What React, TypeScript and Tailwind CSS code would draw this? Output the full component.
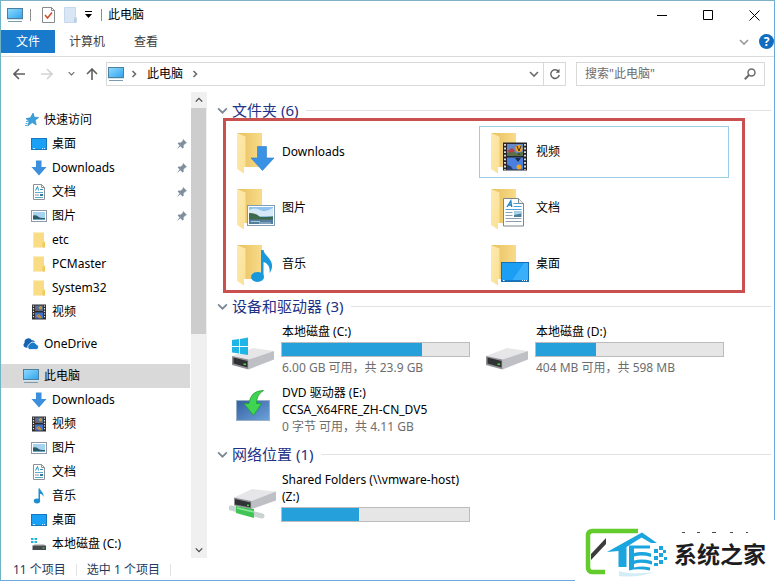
import type { ReactNode } from "react";

type IconProps = { className?: string };

const MonitorIcon = ({ className = "w-4 h-4" }: IconProps) => (
  <svg viewBox="0 0 16 16" className={className}>
    <defs>
      <linearGradient id="screen" x1="0" y1="0" x2="1" y2="1">
        <stop offset="0" stopColor="#8fdcff" />
        <stop offset="1" stopColor="#2fa3ee" />
      </linearGradient>
    </defs>
    <rect x="0.5" y="1.5" width="15" height="10" fill="url(#screen)" stroke="#4e7f9c" />
    <path d="M1 14.5h14" stroke="#7d9bb0" />
    <path d="M0 12.5h16" stroke="#cfe6f3" />
  </svg>
);

const StarIcon = () => (
  <svg viewBox="0 0 16 16" className="w-4 h-4">
    <path
      d="M10 1l1.4 4.2 4.3.3-3.5 2.7 1 4.8-4-2.4L4.600 14l1.500-4.400L3 6.600l4.400-.8z"
      fill="#3aa0dc"
      stroke="#2384c2"
      strokeWidth="0.6"
    />
    <path d="M3 9.500h2.500M2.500 11.500h2M2 13.500h2" stroke="#5fb4e4" />
  </svg>
);

const DesktopIcon = () => (
  <svg viewBox="0 0 16 16" className="w-4 h-4">
    <rect x="0.5" y="2.5" width="15" height="11" fill="#1aa0f5" stroke="#1778bd" />
    <path d="M2 12.5h2M11 12.5h1M13 12.5h1" stroke="#d8f0ff" />
  </svg>
);

const DownIcon = () => (
  <svg viewBox="0 0 16 16" className="w-4 h-4">
    <path d="M5 0.5h5.5V7H15.5L8 15.5.5 7H5z" fill="#3b8fdc" />
  </svg>
);

const DocIcon = () => (
  <svg viewBox="0 0 16 16" className="w-4 h-4">
    <path d="M2.5.5h8l3 3v12h-11z" fill="#fff" stroke="#8b9299" />
    <path d="M10.5.5v3h3" fill="none" stroke="#8b9299" />
    <path d="M4.5 6.5L6.5 2.5l1 4M9 5.5h3" fill="none" stroke="#2a93c4" />
    <path d="M4 8.5h8M4 13.5h8" stroke="#5eaaca" />
    <path d="M4 11h4" stroke="#8b9299" />
    <path d="M9 11h3" stroke="#2f7ba5" strokeWidth="2" />
  </svg>
);

const PictureIcon = () => (
  <svg viewBox="0 0 16 16" className="w-4 h-4">
    <rect x="0.5" y="2.5" width="15" height="11" fill="#fff" stroke="#8d9aa5" />
    <rect x="2" y="4" width="12" height="8" fill="#a8d3ee" />
    <path d="M2 7.5q3-1 5 1t7 1.5v2H2z" fill="#2c5c6b" />
    <path d="M2 11h12v1H2z" fill="#6aa5bd" />
  </svg>
);

const FolderIcon = () => (
  <svg viewBox="0 0 16 16" className="w-4 h-4">
    <path d="M2 .5h11v9l1 .8v5.2H2z" fill="#f9dc83" />
    <path d="M11.5 15.5V11l2.5-1.5v6z" fill="#f1c95c" />
    <path d="M2.5 1v14.5" stroke="#fbe7a8" />
  </svg>
);

const VideoIcon = () => (
  <svg viewBox="0 0 16 16" className="w-4 h-4">
    <rect x="1" y="0.5" width="14" height="15" fill="#2d2d30" />
    <rect x="4" y="1.5" width="8" height="5.5" fill="#5a6f8f" />
    <rect x="4" y="8.5" width="8" height="6" fill="#3f74c9" />
    <circle cx="9.5" cy="3.8" r="1.7" fill="#c7964a" />
    <path d="M4 7V4.5l3 1.5v1z" fill="#7d5b45" />
    <path d="M5 12l3-2 3 3.5-2 1z" fill="#c98b3c" />
    <path d="M2.5 1.5v13M13.5 1.5v13" stroke="#e4e4e4" strokeWidth="1.2" strokeDasharray="1.3 1.3" />
  </svg>
);

const MusicIcon = () => (
  <svg viewBox="0 0 16 16" className="w-4 h-4">
    <path d="M7.5.5h1.5c.4 3 4.2 4 3.5 8.5-.8-2.3-2-3-3.5-3.2V13H7.5z" fill="#1d8fd1" />
    <ellipse cx="6" cy="13" rx="3.2" ry="2.4" fill="#1d8fd1" />
  </svg>
);

const DiskIcon = () => (
  <svg viewBox="0 0 16 16" className="w-4 h-4">
    <path d="M0 2h2.5v2H0zM3.5 2H6v2H3.5zM0 5h2.5v2H0zM3.5 5H6v2H3.5z" fill="#25b4dd" />
    <path d="M3.5 8h9.5l1.5 2H2z" fill="#c9cbcd" />
    <rect x="1.5" y="9.5" width="13.5" height="4.5" fill="#454a4d" />
    <path d="M11.5 12h2" stroke="#4fd06a" />
  </svg>
);

const CloudIcon = () => (
  <svg viewBox="0 0 16 16" className="w-4 h-4">
    <path d="M2.5 11.5A2.6 2.6 0 0 1 1.6 6.8 3.9 3.9 0 0 1 8.8 4.2a3.5 3.5 0 0 1 3 1.3L6 12z" fill="#1562b0" />
    <path
      d="M6.5 13.5a2.8 2.8 0 0 1 .1-5.3A3.6 3.6 0 0 1 13.2 8.3a2.7 2.7 0 0 1 .6 5.2z"
      fill="#1b7ac9"
      stroke="#fff"
      strokeWidth="0.8"
    />
  </svg>
);

const PinIcon = () => (
  <svg viewBox="0 0 12 12" className="w-3 h-3">
    <path d="M7 1l4 4-1.500.4-2 2 .2 2.300L6.500 10.500 4.300 8.300 1 11.300l2.500-4L1.600 5.500l1-1 2.400.1 1.700-1.900z" fill="#7f8f9d" />
  </svg>
);

const Chevron = ({ d, className, color = "#6b6b6b" }: { d: string; className: string; color?: string }) => (
  <svg viewBox="0 0 10 10" className={className}>
    <path d={d} fill="none" stroke={color} strokeWidth="1.6" />
  </svg>
);

const RIGHT = "M3.5 2l3 3-3 3";
const DOWN = "M1 3l4 4 4-4";
const UP = "M1 7l4-4 4 4";

const BigFolder = ({ children }: { children: ReactNode }) => (
  <svg viewBox="0 0 48 48" className="w-12 h-12 shrink-0">
    <defs>
      <linearGradient id="flap" x1="0" y1="0" x2="1" y2="1">
        <stop offset="0" stopColor="#fdeab0" />
        <stop offset="1" stopColor="#fae093" />
      </linearGradient>
      <linearGradient id="back" x1="0" y1="0" x2="1" y2="0">
        <stop offset="0" stopColor="#e8bf5c" />
        <stop offset="1" stopColor="#f8db8a" />
      </linearGradient>
    </defs>
    <path d="M8 5h25v34H8z" fill="url(#back)" />
    <path d="M8 5l8.5 3.500V39H15v6.500L8 41z" fill="url(#flap)" />
    {children}
  </svg>
);

const Drive = () => (
  <g>
    <path d="M3 32l21-8 21 3-25.500 8.500z" fill="#e6e6e9" />
    <path d="M19.500 35.500L45 27v8.500l-25.500 10z" fill="#bfc0c5" />
    <path d="M3 32l16.500 3.500v10L3 41z" fill="#8e9093" />
    <path d="M4.500 33.500L18.500 37v6.500l-14-4z" fill="#2f3133" />
    <path d="M14.500 40l2.500.6" stroke="#51d64e" strokeWidth="1.5" />
  </g>
);

const folders: { name: string; art: ReactNode }[] = [
  {
    name: "Downloads",
    art: <path d="M28.500 18.500h9V30h7.500L33.500 42.500 22 30h6.500z" fill="#3a92e4" stroke="#2b78c4" strokeWidth="0.6" />,
  },
  {
    name: "视频",
    art: (
      <g>
        <rect x="20" y="14.5" width="24" height="28" fill="#26262a" />
        <rect x="24" y="16" width="16" height="12" fill="#6687c8" />
        <rect x="24" y="29.5" width="16" height="12" fill="#4b7fdd" />
        <path d="M24 25l5-3 4 3 7-1v4H24z" fill="#587148" />
        <path d="M24 23l5-3 3 3-4 2z" fill="#b83f43" />
        <circle cx="36" cy="20.5" r="3.5" fill="#f0a51e" />
        <path d="M34 18l2 5M38 18l-2 5M36 25v2" stroke="#442b20" />
        <path d="M32 30h6l-3 4z" fill="#1d2c48" />
        <circle cx="36" cy="39" r="2.5" fill="#f0a51e" />
        <path d="M24 41.5v-5l4 2 2 3z" fill="#263c68" />
        <path d="M22 16v26M42 16v26" stroke="#eee" strokeWidth="1.8" strokeDasharray="1.8 1.8" />
      </g>
    ),
  },
  {
    name: "图片",
    art: (
      <g>
        <rect x="18.5" y="21.5" width="27" height="20" fill="#fff" stroke="#7f9eb5" />
        <rect x="20" y="23" width="24" height="17" fill="#8fc3ee" />
        <path d="M20 26q6-3 11 0t13-2v8H20z" fill="#d6e9f7" />
        <path d="M20 29q7 0 11 4 6 0 13-.5V36H20z" fill="#3f6a49" />
        <path d="M20 35.500h24V40H20z" fill="#527d9c" />
        <path d="M22 37.500h9M30 39h12" stroke="#a6c9dc" />
      </g>
    ),
  },
  {
    name: "文档",
    art: (
      <g>
        <path d="M20.500 14.500h15l5 5v22.500h-20z" fill="#fff" stroke="#7e868d" />
        <path d="M35.500 14.500v5h5" fill="#e9edf0" stroke="#7e868d" />
        <path d="M24 23l3.800-6 .9 6M25.200 21h3.500" fill="none" stroke="#1f83c7" strokeWidth="1.4" />
        <path d="M30.500 19.500h5M30.500 22.500h8M22.500 25.500h16" stroke="#4ca3dc" />
        <path d="M22.500 28.500h7M22.500 31.500h7M22.500 34.500h16M22.500 37.500h16" stroke="#8fa0ad" />
        <rect x="31" y="27.5" width="7.5" height="5.5" fill="#4c7f9c" />
        <path d="M31 27.500h7.500v2L31 31z" fill="#a9d3ea" />
      </g>
    ),
  },
  {
    name: "音乐",
    art: (
      <g fill="#1899dc">
        <path d="M32 10h2.500c1 6 9.500 9 8.500 17-.3 3-1.500 5-2.500 6 1-6-2-10-6-11v16H32z" />
        <ellipse cx="28.5" cy="37" rx="6.5" ry="5" />
      </g>
    ),
  },
  {
    name: "桌面",
    art: (
      <g>
        <rect x="18.5" y="22.5" width="27" height="19" fill="#1b9ff5" stroke="#1670b4" />
        <path d="M29 41l12-18h4v18z" fill="#3bb0fa" />
        <path d="M19 40.500h26" stroke="#1576bf" />
        <path d="M20 40.500h1.500M39 40.500h1M41 40.500h1M43 40.500h1" stroke="#fff" />
      </g>
    ),
  },
];

type Place = { name: string; icon: ReactNode; pinned?: boolean };

const quickAccess: Place[] = [
  { name: "桌面", icon: <DesktopIcon />, pinned: true },
  { name: "Downloads", icon: <DownIcon />, pinned: true },
  { name: "文档", icon: <DocIcon />, pinned: true },
  { name: "图片", icon: <PictureIcon />, pinned: true },
  { name: "etc", icon: <FolderIcon /> },
  { name: "PCMaster", icon: <FolderIcon /> },
  { name: "System32", icon: <FolderIcon /> },
  { name: "视频", icon: <VideoIcon /> },
];

const thisPc: Place[] = [
  { name: "Downloads", icon: <DownIcon /> },
  { name: "视频", icon: <VideoIcon /> },
  { name: "图片", icon: <PictureIcon /> },
  { name: "文档", icon: <DocIcon /> },
  { name: "音乐", icon: <MusicIcon /> },
  { name: "桌面", icon: <DesktopIcon /> },
  { name: "本地磁盘 (C:)", icon: <DiskIcon /> },
];

const TreeRoot = ({ name, icon, selected }: { name: string; icon: ReactNode; selected?: boolean }) => (
  <button className={`flex items-center w-full h-6 pl-[22px] gap-[5px] ${selected ? "bg-[#d9d9d9]" : ""}`}>
    {icon}
    {name}
  </button>
);

const TreeItem = ({ name, icon, pinned }: Place) => (
  <button className="flex items-center w-full h-6 pl-[30px] pr-[2px] gap-[5px]">
    {icon}
    <span className="flex-1 text-left">{name}</span>
    {pinned && <PinIcon />}
  </button>
);

const Group = ({ title, children }: { title: string; children: ReactNode }) => (
  <section>
    <h2 className="flex items-center h-6 pr-[3px] text-[15px] text-[#1e3287]">
      <Chevron d={DOWN} className="w-[11px] h-[11px] mr-1" color="#7a8794" />
      {title}
      <span className="flex-1 h-px ml-2 bg-[#dfe3e6]" />
    </h2>
    {children}
  </section>
);

const Usage = ({ label, percent }: { label: string; percent: number }) => (
  <div
    role="meter"
    aria-label={label}
    aria-valuenow={percent}
    className="h-[15px] w-[189px] my-[2px] -ml-px bg-[#e6e6e6] border border-[#bcbcbc]"
  >
    <div className="h-full bg-[#26a0da]" style={{ width: `${percent}%` }} />
  </div>
);

const DriveItem = ({ art, children }: { art: ReactNode; children: ReactNode }) => (
  <div className="flex items-start h-[61px] pt-[5px] pl-1 gap-[5px] leading-[17px]">
    <svg viewBox="0 0 48 48" className="w-12 h-12 mt-px shrink-0">
      {art}
    </svg>
    <div className="w-[190px]">{children}</div>
  </div>
);

const Logo = () => (
  <div className="absolute -right-px -bottom-px flex items-center w-[200px] h-[61px] bg-white">
    <svg viewBox="0 0 200 61" className="absolute inset-0 w-full h-full">
      <path d="M63 11H17.500q-4.500 0-4.500 4.500v31.500q0 5 4 5h13" fill="none" stroke="#62cc2c" strokeWidth="4.5" />
      <path d="M16 40v-6l15-16v6z" fill="#3c3c3c" />
      <g fill="#1ba5df">
        <path d="M32 32L67 12.500 82 23h-6l-9.500-5.500-15 9.500v20h-8V31z" />
        <path d="M54 25.500h21v3H59v4.500q8-2 17 .5v3.500q-9-2.500-17-.5v4q8-2 18 .5v3.500q-10-3-18-.5v3.500q8-2 16 0v3q-13-2.500-21 0z" />
        <path d="M79 29h4v4h-4zM84 26h4v4h-4zM79 36h4v4h-4zM84 33h4v4h-4zM88 30h3v3h-3zM84 40h4v4h-4zM89 37h3v3h-3zM79 43h4v3h-4z" />
      </g>
      <path d="M44 51q12 4 36 1-18 6-36 4z" fill="#d3edf7" />
      <path d="M107 12.500h3M122 12.500h3M137 12.500h4M155 12.500h3M171 12.500h2" stroke="#4a4a4a" />
    </svg>
    <span className="relative ml-[99px] mt-[7px] text-[23px] leading-7 font-bold text-[#1d1d1f]">系统之家</span>
  </div>
);

export default function App() {
  return (
    <div className="relative flex flex-col min-h-screen bg-white border border-[#6aaade] border-l-[#6fb3c4] border-t-[#7fb2c8] font-['Noto_Sans','Noto_Sans_CJK_SC',sans-serif] text-[12px] leading-4 text-black whitespace-nowrap">
      <header className="flex items-center h-[28px] pl-[6px]">
        <MonitorIcon />
        <span className="w-px h-3 ml-[7px] mr-[11px] bg-[#8d8d8d]" />
        <button aria-label="属性">
          <svg viewBox="0 0 13 16" className="w-[13px] h-4">
            <path d="M.5.5h9l3 3v12H.5z" fill="#fff" stroke="#8b8b8b" />
            <path d="M9.500.5v3h3" fill="none" stroke="#8b8b8b" />
            <path d="M3 8l2.500 3L10 5.500" fill="none" stroke="#d3502f" strokeWidth="1.6" />
          </svg>
        </button>
        <button aria-label="新建文件夹" className="ml-[9px]">
          <svg viewBox="0 0 13 16" className="w-[13px] h-4">
            <path d="M.5.5h11v9l1 1v5H.5z" fill="#d9e7f5" stroke="#c6d8ea" />
            <path d="M10 15v-4l2-1v5z" fill="#b9cfe6" />
          </svg>
        </button>
        <button aria-label="自定义" className="ml-[7px]">
          <svg viewBox="0 0 9 8" className="w-[9px] h-2">
            <path d="M1 .5h7" stroke="#000" />
            <path d="M1 3h7L4.500 7z" />
          </svg>
        </button>
        <span className="w-px h-3 ml-2 mr-[6px] bg-[#8d8d8d]" />
        <h1>此电脑</h1>
        <div className="flex gap-[6px] ml-auto">
          <button aria-label="最小化" className="flex justify-center w-10">
            <svg viewBox="0 0 11 11" className="w-[11px] h-[11px]">
              <path d="M0 5.500h10" stroke="#000" />
            </svg>
          </button>
          <button aria-label="最大化" className="flex justify-center w-10">
            <svg viewBox="0 0 11 11" className="w-[11px] h-[11px]">
              <path d="M.5.5h9v9h-9z" fill="none" stroke="#000" />
            </svg>
          </button>
          <button aria-label="关闭" className="flex justify-center w-10">
            <svg viewBox="0 0 11 11" className="w-[11px] h-[11px]">
              <path d="M.5.5l10 10M10.500.5l-10 10" stroke="#000" />
            </svg>
          </button>
        </div>
      </header>

      <nav className="flex items-end h-[28px] pb-[3px] border-b border-[#dadbdc] text-[#3c3c3c]">
        <button className="w-[54px] h-[23px] bg-[#1979ca] text-white">文件</button>
        <button className="h-[23px] ml-[14px]">计算机</button>
        <button className="h-[23px] ml-[29px]">查看</button>
        <div className="flex items-center h-[23px] ml-auto gap-[10px]">
          <button aria-label="展开功能区">
            <Chevron d={DOWN} className="w-[10px] h-[10px]" color="#9a9a9a" />
          </button>
          <button
            aria-label="帮助"
            className="w-[15px] h-[15px] rounded-full bg-[#0f6cbf] text-white text-[12px] leading-[15px] font-bold"
          >
            ?
          </button>
        </div>
      </nav>

      <div className="flex items-center h-[33px] pl-1 pr-[9px]">
        <button aria-label="后退" className="flex justify-center w-[27px]">
          <svg viewBox="0 0 12 12" className="w-3 h-3" fill="none" stroke="#5f5f5f" strokeWidth="1.6">
            <path d="M12 6H1M6 1L1 6l5 5" />
          </svg>
        </button>
        <button aria-label="前进" className="flex justify-center w-[30px]">
          <svg viewBox="0 0 12 12" className="w-3 h-3" fill="none" stroke="#d2d2d2" strokeWidth="1.6">
            <path d="M0 6h11M6 1l5 5-5 5" />
          </svg>
        </button>
        <button aria-label="最近" className="flex justify-center w-[18px]">
          <Chevron d={DOWN} className="w-[7px] h-[7px]" />
        </button>
        <button aria-label="上移" className="flex justify-center w-6 mr-[2px]">
          <svg viewBox="0 0 12 12" className="w-3 h-3" fill="none" stroke="#5f5f5f" strokeWidth="1.6">
            <path d="M6 12V1M1 6l5-5 5 5" />
          </svg>
        </button>
        <div className="flex items-center flex-1 h-6 pl-px border border-[#d9d9d9]">
          <MonitorIcon className="w-4 h-4" />
          <Chevron d={RIGHT} className="w-[10px] h-[10px] ml-[5px] mr-2" />
          <button>此电脑</button>
          <Chevron d={RIGHT} className="w-[10px] h-[10px] ml-[7px]" />
          <button aria-label="历史" className="ml-auto mr-1">
            <Chevron d={DOWN} className="w-[10px] h-[10px]" />
          </button>
          <button aria-label="刷新" className="flex items-center justify-center w-[22px] h-full border-l border-[#d9d9d9]">
            <svg viewBox="0 0 12 12" className="w-3 h-3">
              <path d="M9.500 3.500A4.300 4.300 0 1 0 10.300 7" fill="none" stroke="#5f5f5f" strokeWidth="1.4" />
              <path d="M10.500.8v4H6.600z" fill="#5f5f5f" />
            </svg>
          </button>
        </div>
        <label className="flex items-center w-[189px] h-6 ml-[10px] px-2 border border-[#d9d9d9]">
          <input
            aria-label="搜索"
            placeholder={'搜索"此电脑"'}
            className="flex-1 min-w-0 outline-none placeholder:text-[#6d6d6d]"
          />
          <svg viewBox="0 0 12 12" className="w-3 h-3" fill="none" stroke="#6b6b6b">
            <circle cx="7.5" cy="4.5" r="3.5" strokeWidth="1.5" />
            <path d="M5 7L.8 11.200" strokeWidth="2" />
          </svg>
        </label>
      </div>

      <div className="flex flex-1 pt-[2px]">
        <aside className="flex flex-col w-[189px] pt-4 gap-2">
          <div>
            <TreeRoot name="快速访问" icon={<StarIcon />} />
            {quickAccess.map((p) => (
              <TreeItem key={p.name} {...p} />
            ))}
          </div>
          <TreeRoot name="OneDrive" icon={<CloudIcon />} />
          <div>
            <TreeRoot name="此电脑" icon={<MonitorIcon />} selected />
            {thisPc.map((p) => (
              <TreeItem key={p.name} {...p} />
            ))}
          </div>
        </aside>
        <div className="flex flex-col w-4 ml-px bg-[#f0f0f0]">
          <button aria-label="向上滚动" className="flex items-center justify-center h-4">
            <Chevron d={UP} className="w-2 h-2" color="#4a4a4a" />
          </button>
          <div className="flex-1">
            <div className="h-[52%] mr-px bg-[#cdcdcd]" />
          </div>
          <button aria-label="向下滚动" className="flex items-center justify-center h-4">
            <Chevron d={DOWN} className="w-2 h-2" color="#4a4a4a" />
          </button>
        </div>

        <main className="flex-1 min-w-0 pt-[6px] pl-[10px]">
          <Group title="文件夹 (6)">
            <div className="relative grid grid-cols-[repeat(auto-fill,250px)] gap-1 mt-1 mb-1 ml-2">
              {folders.map((f) => (
                <button
                  key={f.name}
                  className={`flex items-center h-[52px] pl-[3px] gap-[5px] border ${f.name === "视频" ? "border-[#99cde8]" : "border-transparent"}`}
                >
                  <BigFolder>{f.art}</BigFolder>
                  {f.name}
                </button>
              ))}
              <div className="absolute -left-[2px] -top-2 -bottom-[3px] w-[522px] border-3 border-[#c8504f] pointer-events-none" />
            </div>
          </Group>

          <Group title="设备和驱动器 (3)">
            <div className="grid grid-cols-[repeat(auto-fill,250px)] gap-x-1 mb-[2px] ml-2">
              <DriveItem
                art={
                  <g>
                    <Drive />
                    <path d="M3 16l7-1v7H3zM11 15l8-1.500V22h-8zM3 23h7v6.500l-7-1zM11 23h8v8l-8-1.200z" fill="#1fb5e6" />
                  </g>
                }
              >
                <p>本地磁盘 (C:)</p>
                <Usage label="本地磁盘 (C:)" percent={75} />
                <p className="text-[#6d6d6d]">6.00 GB 可用，共 23.9 GB</p>
              </DriveItem>
              <DriveItem art={<Drive />}>
                <p>本地磁盘 (D:)</p>
                <Usage label="本地磁盘 (D:)" percent={32} />
                <p className="text-[#6d6d6d]">404 MB 可用，共 598 MB</p>
              </DriveItem>
              <DriveItem
                art={
                  <g>
                    <defs>
                      <linearGradient id="dvd" x1="0" y1="0" x2="1" y2="1">
                        <stop offset="0" stopColor="#335f9f" />
                        <stop offset="1" stopColor="#6da3dc" />
                      </linearGradient>
                    </defs>
                    <rect x="7.5" y="15.5" width="33" height="20" fill="url(#dvd)" stroke="#9ab0c6" />
                    <path
                      d="M34.500 5.500q-13 0-14.500 13h-5l9.500 12 8-12h-5q0-9 7-13z"
                      fill="#3fd451"
                      stroke="#1f9e35"
                      strokeWidth="0.8"
                    />
                  </g>
                }
              >
                <p>DVD 驱动器 (E:)</p>
                <p>CCSA_X64FRE_ZH-CN_DV5</p>
                <p className="text-[#6d6d6d]">0 字节 可用，共 4.11 GB</p>
              </DriveItem>
            </div>
          </Group>

          <Group title="网络位置 (1)">
            <div className="grid grid-cols-[repeat(auto-fill,250px)] gap-x-1 ml-2">
              <DriveItem
                art={
                  <g>
                    <path d="M2 36l31 8" stroke="#c9d3d1" strokeWidth="5" strokeLinecap="round" />
                    <path d="M7 34l18 3v9L7 41z" fill="#3fc455" />
                    <path d="M8 36l17 4" stroke="#8fe79b" strokeWidth="1.5" />
                    <path d="M5 25.500L23 17l24 2.500L22.500 29z" fill="#e6e6e9" />
                    <path d="M22.500 29L47 19.500v9L22.500 37z" fill="#bfc0c5" />
                    <path d="M5 25.500L22.500 29v8L5 33.500z" fill="#8e9093" />
                    <path d="M6 27l15.500 3.500v5L6 32.500z" fill="#2f3133" />
                    <path d="M18 33.200l2 .4" stroke="#51d64e" strokeWidth="1.5" />
                  </g>
                }
              >
                <p className="whitespace-normal">Shared Folders (\\vmware-host) (Z:)</p>
                <Usage label="Shared Folders (Z:)" percent={41} />
              </DriveItem>
            </div>
          </Group>
        </main>
      </div>

      <footer className="flex items-center h-[22px] pt-[2px] pl-3 text-[#1e395b]">
        <span>11 个项目</span>
        <span className="w-px h-3 mx-[10px] bg-[#e3e3e3]" />
        <span>选中 1 个项目</span>
        <span className="w-px h-3 mx-[10px] bg-[#e3e3e3]" />
      </footer>

      <Logo />
    </div>
  );
}
